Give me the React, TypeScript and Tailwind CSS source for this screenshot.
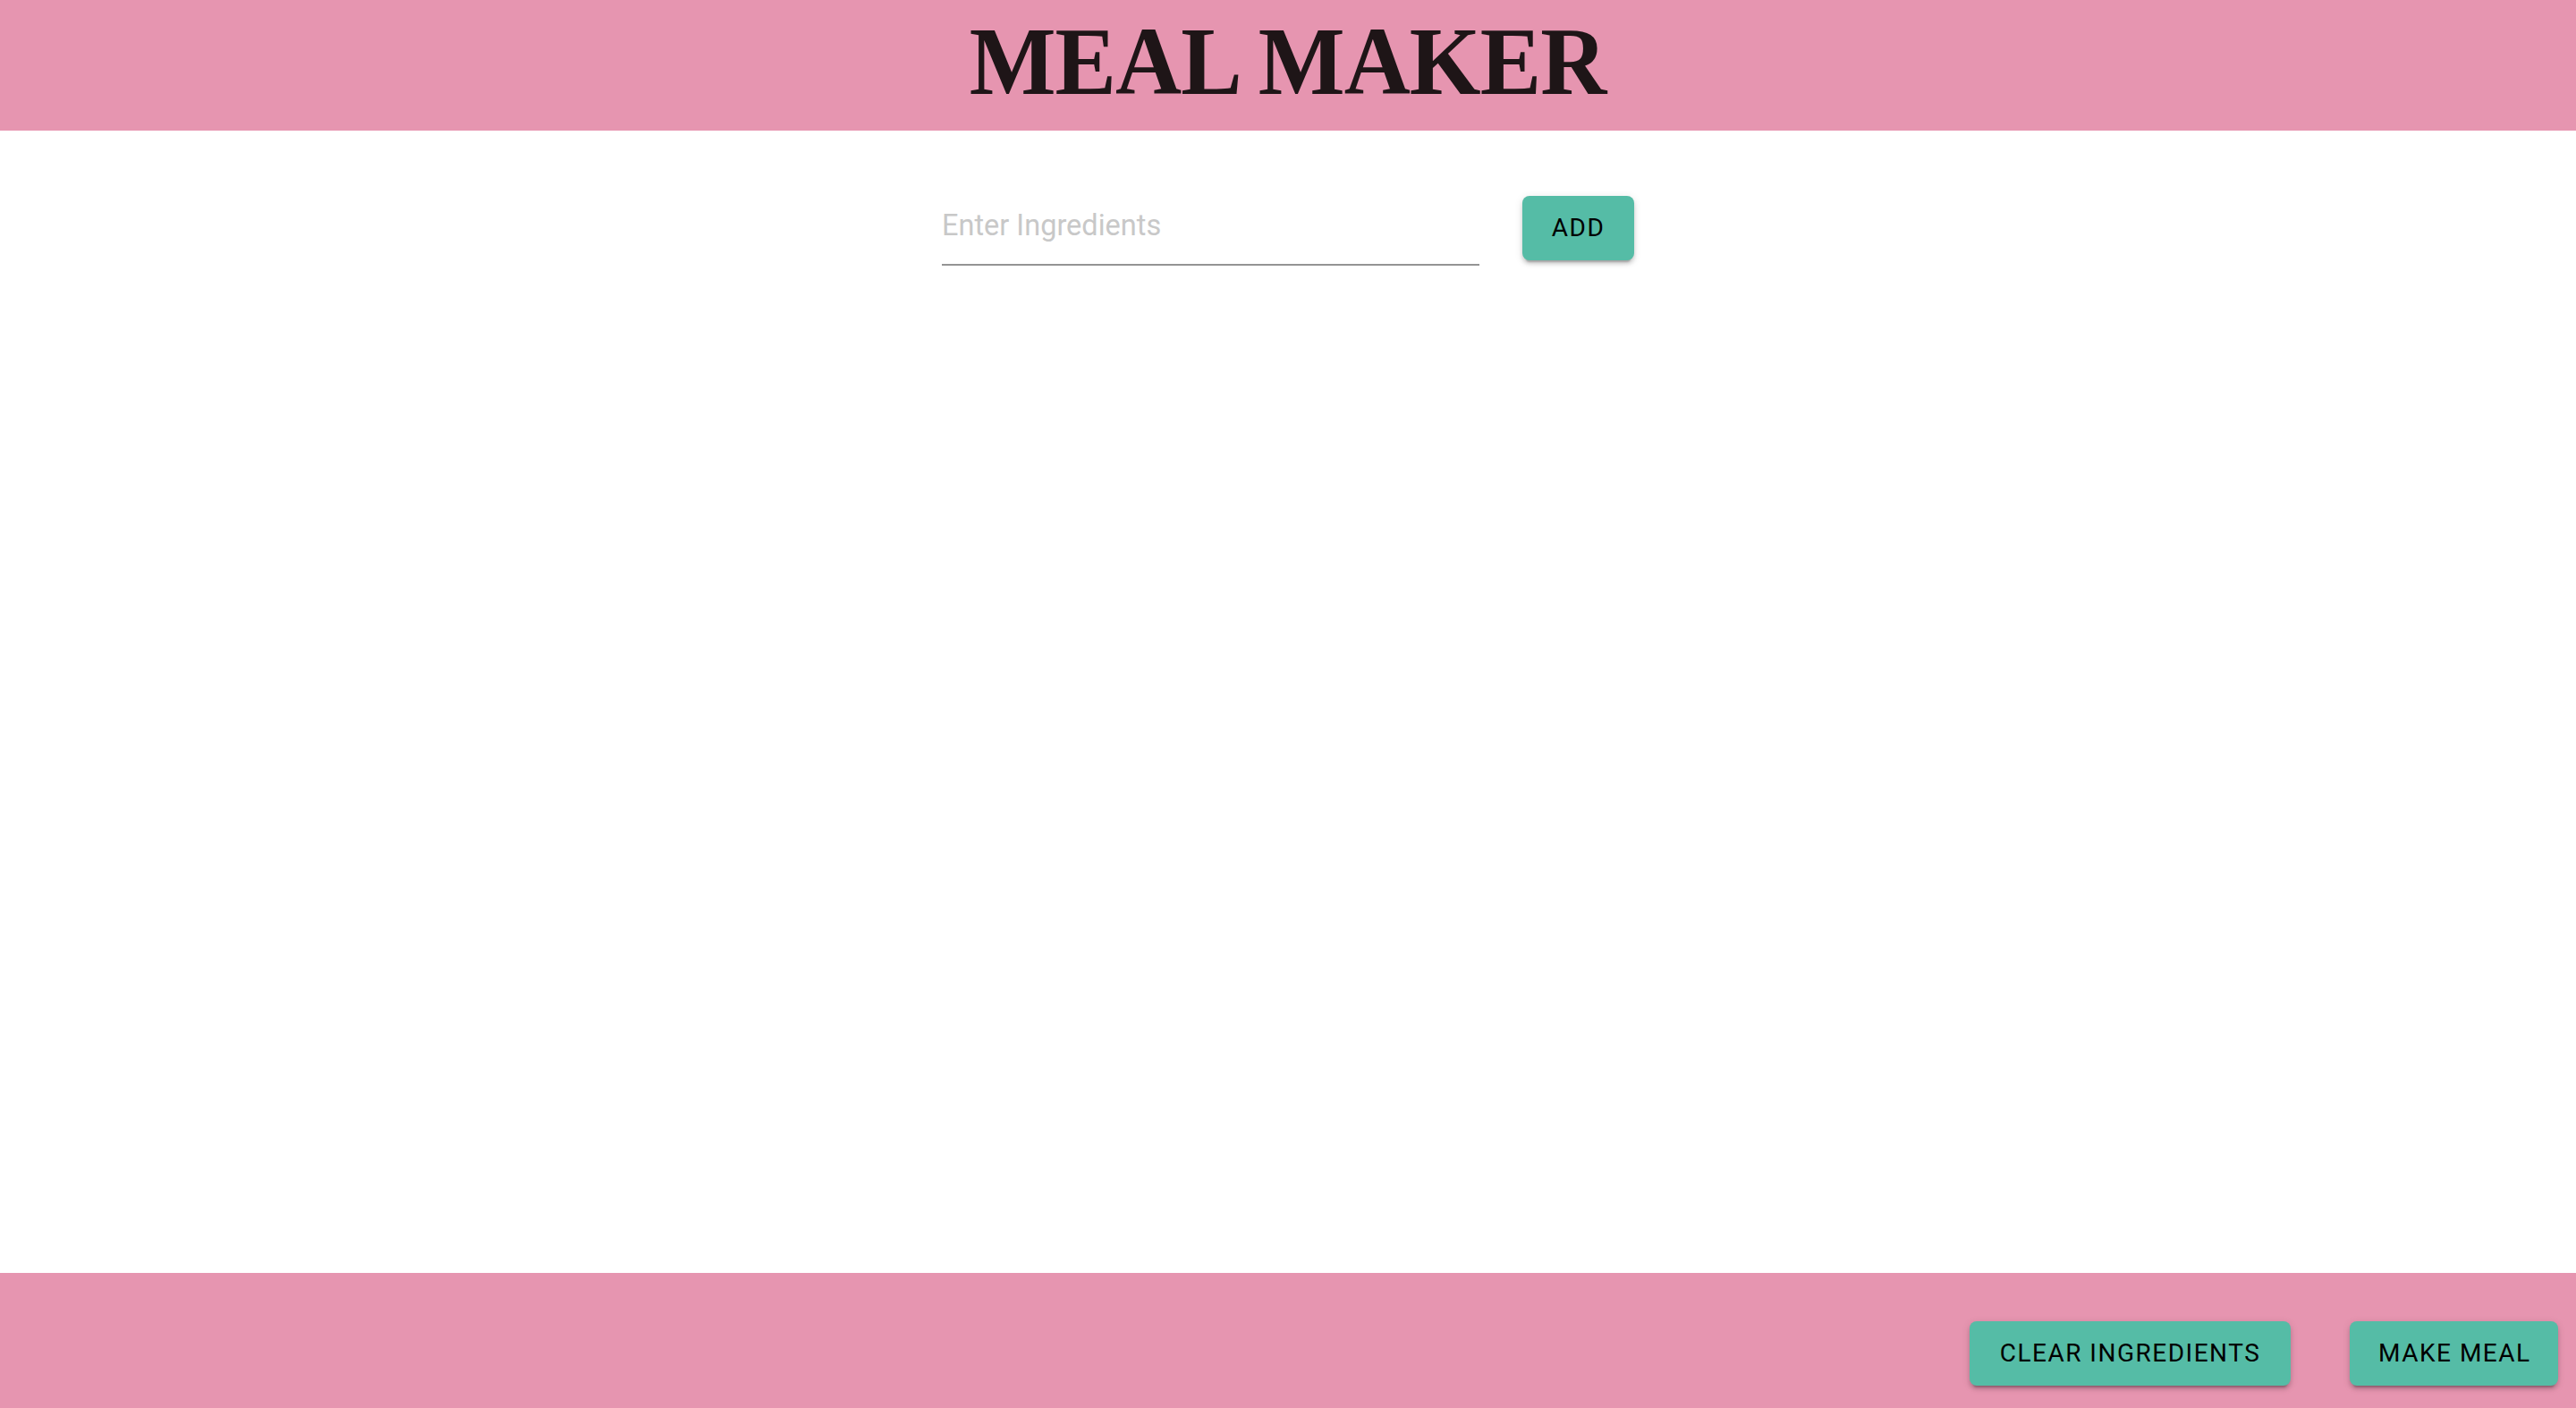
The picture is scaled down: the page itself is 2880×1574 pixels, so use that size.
import { useState } from "react";

const btn =
  "bg-[#55bca6] text-black whitespace-nowrap rounded-[8px] h-[72px] px-[32px] text-[28px] tracking-[1.5px] uppercase font-['Roboto',sans-serif] shadow-[0_6px_2px_-4px_rgba(0,0,0,0.2),0_4px_4px_0_rgba(0,0,0,0.14),0_2px_10px_0_rgba(0,0,0,0.12)]";

export default function App() {
  const [ingredient, setIngredient] = useState("");
  const [ingredients, setIngredients] = useState<string[]>([]);

  const add = () => {
    if (!ingredient.trim()) return;
    setIngredients([...ingredients, ingredient.trim()]);
    setIngredient("");
  };

  return (
    <div className="min-h-screen flex flex-col bg-white">
      <header className="h-[146px] bg-[#e695b0] flex items-center justify-center">
        <h1 className="font-['Liberation_Serif',serif] font-bold text-[108px] leading-none tracking-[-1px] text-[#1e1517] -mt-[8px] scale-x-[0.95]">
          MEAL MAKER
        </h1>
      </header>

      <main className="flex-1 flex flex-col items-center pt-[73px]">
        <div className="flex items-start gap-[48px]">
          <input
            className="w-[601px] pt-[13px] pb-[23px] leading-[40px] text-[32.5px] border-b-2 border-[#949494] outline-none font-['Roboto',sans-serif] text-[#222] placeholder:text-[#c8c8c8]"
            placeholder="Enter Ingredients"
            value={ingredient}
            onChange={(e) => setIngredient(e.target.value)}
          />
          <button className={btn + " w-[125px] px-0 h-[71px]"} onClick={add}>
            Add
          </button>
        </div>
        <ul className="mt-8 font-['Roboto',sans-serif] text-[28px]">
          {ingredients.map((i, idx) => (
            <li key={idx}>{i}</li>
          ))}
        </ul>
      </main>

      <footer className="h-[151px] bg-[#e695b0] flex justify-end items-start pt-[54px] pr-[20px] gap-[66px]">
        <button className={btn + " w-[359px] px-0"} onClick={() => setIngredients([])}>
          Clear Ingredients
        </button>
        <button className={btn + " w-[233px] px-0"}>Make Meal</button>
      </footer>
    </div>
  );
}
